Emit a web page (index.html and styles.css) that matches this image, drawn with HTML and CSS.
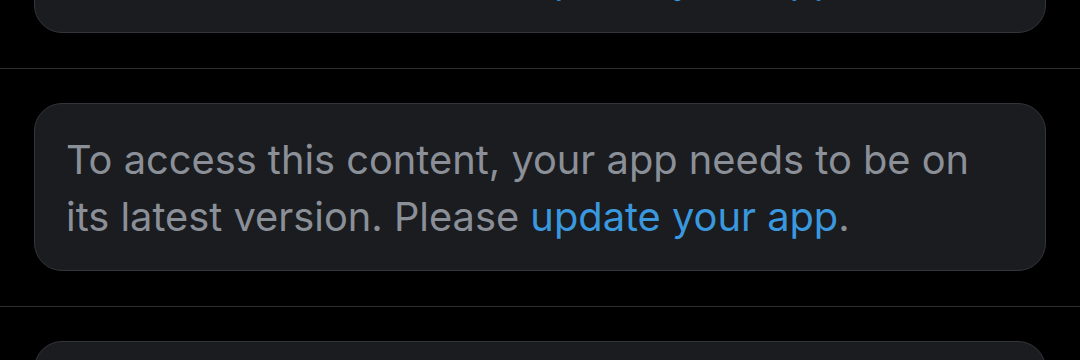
FILE: index.html
```html
<!DOCTYPE html>
<html lang="en">
<head>
<meta charset="utf-8">
<link rel="stylesheet" href="styles.css">
</head>
<body>
<div class="feed">
  <div class="item">
    <div class="card"><p class="msg">To access this content, your app needs to be on its latest version. Please <a class="link" href="#">update your app</a>.</p></div>
  </div>
  <div class="item">
    <div class="card"><p class="msg">To access this content, your app needs to be on its latest version. Please <a class="link" href="#">update your app</a>.</p></div>
  </div>
  <div class="item">
    <div class="card"><p class="msg">To access this content, your app needs to be on its latest version. Please <a class="link" href="#">update your app</a>.</p></div>
  </div>
</div>
</body>
</html>
```
FILE: styles.css
```css
html, body {
  margin: 0;
  padding: 0;
  background: #000;
  height: 100%;
  overflow: hidden;
}
.feed {
  margin-top: -135px;
  display: flex;
  flex-direction: column;
}
.item {
  padding: 0 34px 35px;
  border-bottom: 1px solid #2e2f32;
}
.item + .item {
  padding-top: 34px;
}
.card {
  background: #1a1c20;
  border: 1px solid #33353a;
  border-radius: 28px;
  padding: 27px 31px 25px;
  box-sizing: border-box;
  height: 168px;
}
.msg {
  margin: 0;
  font-family: Inter, "Noto Sans", sans-serif;
  font-size: 39.8px;
  line-height: 57px;
  color: #8b9098;
}
.link {
  color: #3a98de;
  text-decoration: none;
}
```
